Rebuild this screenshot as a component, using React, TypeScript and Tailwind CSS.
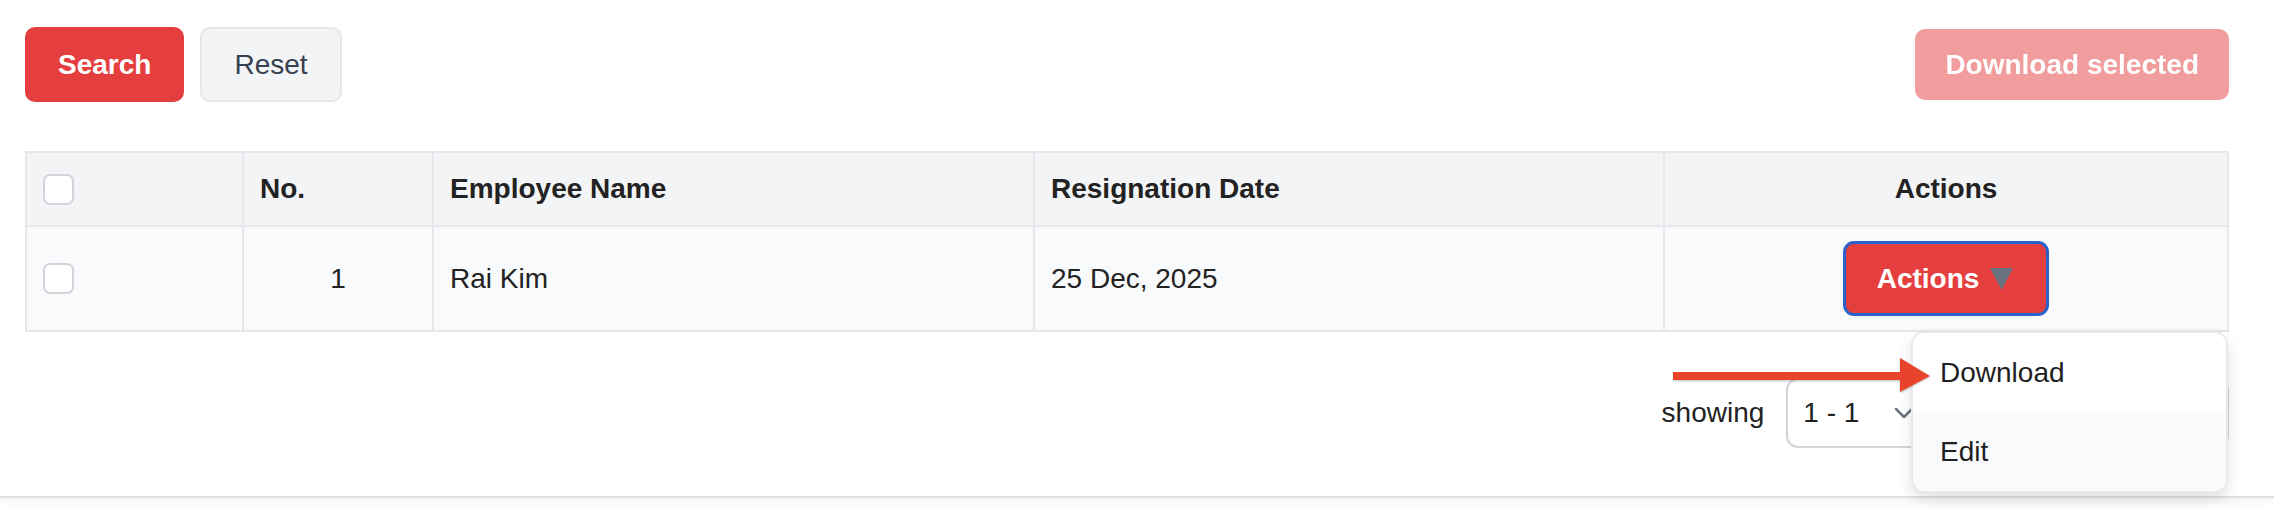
import { useState } from "react";

type Row = {
  id: number;
  name: string;
  resignedAt: string;
};

const ROWS: Row[] = [{ id: 1, name: "Rai Kim", resignedAt: "25 Dec, 2025" }];

const checkboxClass =
  "block h-[31px] w-[31px] appearance-none rounded-[7px] border-2 border-[#d1d5db] bg-white";

export default function App() {
  const [menuOpen] = useState(true);

  return (
    <div className="min-h-screen bg-white font-['Liberation_Sans',Arial,sans-serif] text-[28px] text-[#222]">
      <div className="relative border-b-2 border-[#e0e0e0] bg-white pb-[48px] pl-[25px] pr-[45px] pt-[27px] shadow-[0_4px_8px_rgba(0,0,0,0.05)]">
        {/* filters */}
        <div className="flex items-center justify-between">
          <div className="flex items-center gap-4">
            <button className="h-[75px] rounded-[10px] border-2 border-[#e53e3e] bg-[#e53e3e] px-[31px] font-bold text-white">
              Search
            </button>
            <button className="h-[75px] rounded-[10px] border-2 border-[#e5e7eb] bg-[#f3f4f6] px-[32px] text-[#374151]">
              Reset
            </button>
          </div>
          <button
            disabled
            className="h-[71px] rounded-[10px] bg-[#e53e3e] px-[30px] font-bold text-white opacity-50"
          >
            Download selected
          </button>
        </div>

        {/* table */}
        <div className="relative mt-[49px]">
          <table className="w-full table-fixed border-collapse border-2 border-[#e5e7eb]">
            <colgroup>
              <col className="w-[217px]" />
              <col className="w-[190px]" />
              <col className="w-[601px]" />
              <col className="w-[630px]" />
              <col />
            </colgroup>
            <thead>
              <tr className="h-[74px] bg-[#f3f4f6]">
                <th className="border-2 border-[#e5e7eb] px-4 text-left">
                  <input type="checkbox" className={checkboxClass} />
                </th>
                <th className="border-2 border-[#e5e7eb] px-4 text-left font-bold">No.</th>
                <th className="border-2 border-[#e5e7eb] px-4 text-left font-bold">Employee Name</th>
                <th className="border-2 border-[#e5e7eb] px-4 text-left font-bold">Resignation Date</th>
                <th className="border-2 border-[#e5e7eb] px-4 text-center font-bold">Actions</th>
              </tr>
            </thead>
            <tbody>
              {ROWS.map((row) => (
                <tr key={row.id} className="h-[105px] bg-[#f9fafb]">
                  <td className="border-2 border-[#e5e7eb] px-4">
                    <input type="checkbox" className={checkboxClass} />
                  </td>
                  <td className="border-2 border-[#e5e7eb] px-4 text-center">{row.id}</td>
                  <td className="border-2 border-[#e5e7eb] px-4">{row.name}</td>
                  <td className="border-2 border-[#e5e7eb] px-4">{row.resignedAt}</td>
                  <td className="border-2 border-[#e5e7eb] px-4">
                    <div className="flex justify-center">
                      <button className="flex h-[75px] items-center gap-[11px] rounded-[11px] border-[3px] border-[#2a62cb] bg-[#e53e3e] pl-[31px] pr-[33px] font-bold text-white">
                        Actions
                        <svg width="23" height="23" viewBox="0 0 23 23">
                          <polygon points="0,1 23,1 11.5,23" fill="#6b7280" />
                        </svg>
                      </button>
                    </div>
                  </td>
                </tr>
              ))}
            </tbody>
          </table>

          {menuOpen && (
            <div className="absolute right-[1px] top-[calc(100%-1px)] z-10 w-[317px] overflow-hidden rounded-[14px] border-2 border-[#e8e9ec] bg-white shadow-[0_6px_14px_rgba(0,0,0,0.12)]">
              <div className="flex h-[79px] items-center bg-white pl-[27px] text-[#1f1f1f]">Download</div>
              <div className="flex h-[79px] items-center bg-[#f9fafb] pl-[27px] text-[#1f1f1f]">Edit</div>
            </div>
          )}
        </div>

        {/* pagination */}
        <div className="mt-[46px] flex items-center justify-end">
          <span>showing</span>
          <div className="ml-[22px] flex h-[70px] w-[150px] items-center justify-between rounded-[12px] border-2 border-[#d1d5db] bg-white pl-[15px] pr-[20px]">
            <span>1 - 1</span>
            <svg width="20" height="12" viewBox="0 0 20 12" fill="none">
              <path d="M2 2l8 8 8-8" stroke="#6b7280" strokeWidth="2.5" strokeLinecap="round" strokeLinejoin="round" />
            </svg>
          </div>
          <span className="ml-[40px]">of 1</span>
          <button className="ml-[40px] h-[70px] w-[70px] rounded-[12px] border-2 border-[#d1d5db]">‹</button>
          <button className="ml-[26px] h-[70px] w-[70px] rounded-[12px] border-2 border-[#d1d5db]">›</button>
        </div>

        {/* annotation arrow */}
        <svg
          className="pointer-events-none absolute left-[1668px] top-[352px] z-20 drop-shadow-[0_1px_1px_rgba(0,0,0,0.25)]"
          width="266"
          height="48"
          viewBox="0 0 266 48"
        >
          <line x1="5" y1="24" x2="236" y2="24" stroke="#e8432b" strokeWidth="8" />
          <polygon points="232,6 262,24 232,40" fill="#e8432b" />
        </svg>
      </div>
    </div>
  );
}
